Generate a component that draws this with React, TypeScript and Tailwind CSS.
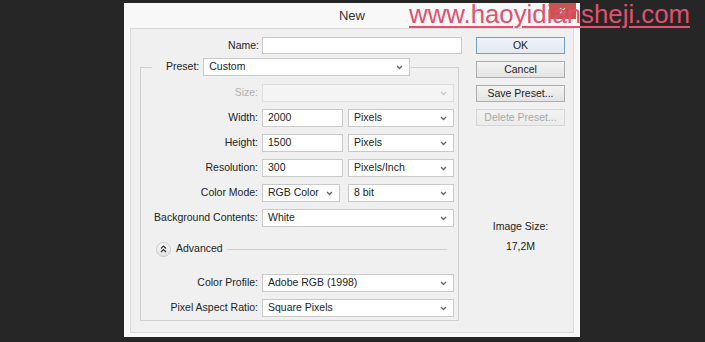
import React from "react";

const font = { fontFamily: '"Liberation Sans", Arial, sans-serif' };

function Chevron({ light = false }: { light?: boolean }) {
  return (
    <svg width="7" height="5" viewBox="0 0 7 5" className="shrink-0 mr-[1px]">
      <path d="M1 1 L3.5 3.5 L6 1" fill="none" stroke={light ? "#c8c8c8" : "#666"} strokeWidth="1.3" />
    </svg>
  );
}

function Select({ value, w, disabled = false }: { value: string; w: string; disabled?: boolean }) {
  return (
    <div
      className={`${w} h-[18px] flex items-center justify-between pl-[5px] pr-[5px] border ${
        disabled ? "bg-[#f4f4f4] border-[#dedede]" : "bg-white border-[#c9c9c9]"
      } text-[#222]`}
    >
      <span className="truncate">{value}</span>
      <Chevron light={disabled} />
    </div>
  );
}

function Input({ value, w }: { value: string; w: string }) {
  return (
    <div className={`${w} h-[18px] flex items-center pl-[5px] bg-white border border-[#c9c9c9] text-[#222]`}>
      {value}
    </div>
  );
}

function Row({ label, children, dim = false }: { label: string; children: React.ReactNode; dim?: boolean }) {
  return (
    <div className="flex items-center h-[18px]">
      <div className={`w-[117px] text-right ${dim ? "text-[#b0b0b0]" : "text-[#222]"}`}>{label}</div>
      <div className="ml-[4px] flex items-center">{children}</div>
    </div>
  );
}

function Button({ label, primary = false, disabled = false }: { label: string; primary?: boolean; disabled?: boolean }) {
  return (
    <div
      className={`h-[17px] w-[89px] flex items-center justify-center border bg-gradient-to-b ${
        primary
          ? "border-[#6f9fd0] from-[#eef4fa] to-[#e3e9ef] text-[#222]"
          : disabled
          ? "border-[#d6d6d6] from-[#f2f2f2] to-[#ececec] text-[#a8a8a8]"
          : "border-[#adadad] from-[#f3f3f3] to-[#e4e4e4] text-[#222]"
      }`}
    >
      {label}
    </div>
  );
}

export default function App() {
  return (
    <div className="w-[705px] h-[342px] bg-[#262626] relative overflow-hidden pt-[3px] pl-[124px] text-[10.5px]" style={font}>
      <div className="w-[456px] h-[334px] bg-[#f8f8f8] flex flex-col relative">
        <div className="h-[25px] flex items-center justify-center text-[13px] text-[#333]">New</div>
        <div className="absolute right-[4px] top-0 w-[27px] h-[16px] bg-[#c9534f] flex items-center justify-center text-white text-[12px] leading-none">
          ×
        </div>
        <div className="mx-[6px] mb-[4px] flex-1 bg-[#f0f0f0] border border-[#dadada] flex pt-[8px]">
          {/* left column */}
          <div className="w-[332px] flex flex-col">
            <div className="flex items-center h-[17px]">
              <div className="w-[128px] text-right text-[#222]">Name:</div>
              <div className="ml-[3px] w-[200px] h-[17px] bg-white border border-[#c9c9c9]" />
            </div>
            <fieldset className="ml-[9px] w-[319px] mt-[4px] border border-[#cfcfcf] pb-[3px]">
              <legend className="ml-[11px] flex items-center pr-[1px]">
                <span className="pl-[14px] pr-[4px] text-[#222]">Preset:</span>
                <Select value="Custom" w="w-[207px]" />
              </legend>
              <div className="flex flex-col gap-[7px] mt-[8px]">
                <Row label="Size:" dim>
                  <Select value="" w="w-[192px]" disabled />
                </Row>
                <Row label="Width:">
                  <Input value="2000" w="w-[81px]" />
                  <div className="ml-[5px]">
                    <Select value="Pixels" w="w-[106px]" />
                  </div>
                </Row>
                <Row label="Height:">
                  <Input value="1500" w="w-[81px]" />
                  <div className="ml-[5px]">
                    <Select value="Pixels" w="w-[106px]" />
                  </div>
                </Row>
                <Row label="Resolution:">
                  <Input value="300" w="w-[81px]" />
                  <div className="ml-[5px]">
                    <Select value="Pixels/Inch" w="w-[106px]" />
                  </div>
                </Row>
                <Row label="Color Mode:">
                  <Select value="RGB Color" w="w-[78px]" />
                  <div className="ml-[8px]">
                    <Select value="8 bit" w="w-[106px]" />
                  </div>
                </Row>
                <Row label="Background Contents:">
                  <Select value="White" w="w-[192px]" />
                </Row>
              </div>
              <div className="flex items-center h-[16px] mt-[14px] pl-[15px]">
                <div className="w-[15px] h-[15px] rounded-full border border-[#c8c8c8] bg-gradient-to-b from-[#fafafa] to-[#e2e2e2] flex items-center justify-center">
                  <svg width="7" height="8" viewBox="0 0 7 8">
                    <path d="M1 3.5 L3.5 1 L6 3.5 M1 7 L3.5 4.5 L6 7" fill="none" stroke="#333" strokeWidth="1.2" />
                  </svg>
                </div>
                <span className="ml-[5px] text-[#222]">Advanced</span>
                <div className="flex-1 h-px bg-[#cfcfcf] ml-[4px] mr-[11px]" />
              </div>
              <div className="flex flex-col gap-[7px] mt-[17px]">
                <Row label="Color Profile:">
                  <Select value="Adobe RGB (1998)" w="w-[192px]" />
                </Row>
                <Row label="Pixel Aspect Ratio:">
                  <Select value="Square Pixels" w="w-[192px]" />
                </Row>
              </div>
            </fieldset>
          </div>
          {/* right column */}
          <div className="ml-[13px] w-[89px] flex flex-col">
            <div className="flex flex-col gap-[7px]">
              <Button label="OK" primary />
              <Button label="Cancel" />
              <Button label="Save Preset..." />
              <Button label="Delete Preset..." disabled />
            </div>
            <div className="mt-[94px] text-center text-[#222] leading-[13px]">Image Size:</div>
            <div className="mt-[7px] text-center text-[#222] leading-[13px]">17,2M</div>
          </div>
        </div>
      </div>
      <div
        className="absolute left-[409px] top-[2px] text-[25.8px] leading-none text-[#e2506f] underline decoration-[1.5px] underline-offset-[3px]"
        style={font}
      >
        www.haoyidiansheji.com
      </div>
    </div>
  );
}
